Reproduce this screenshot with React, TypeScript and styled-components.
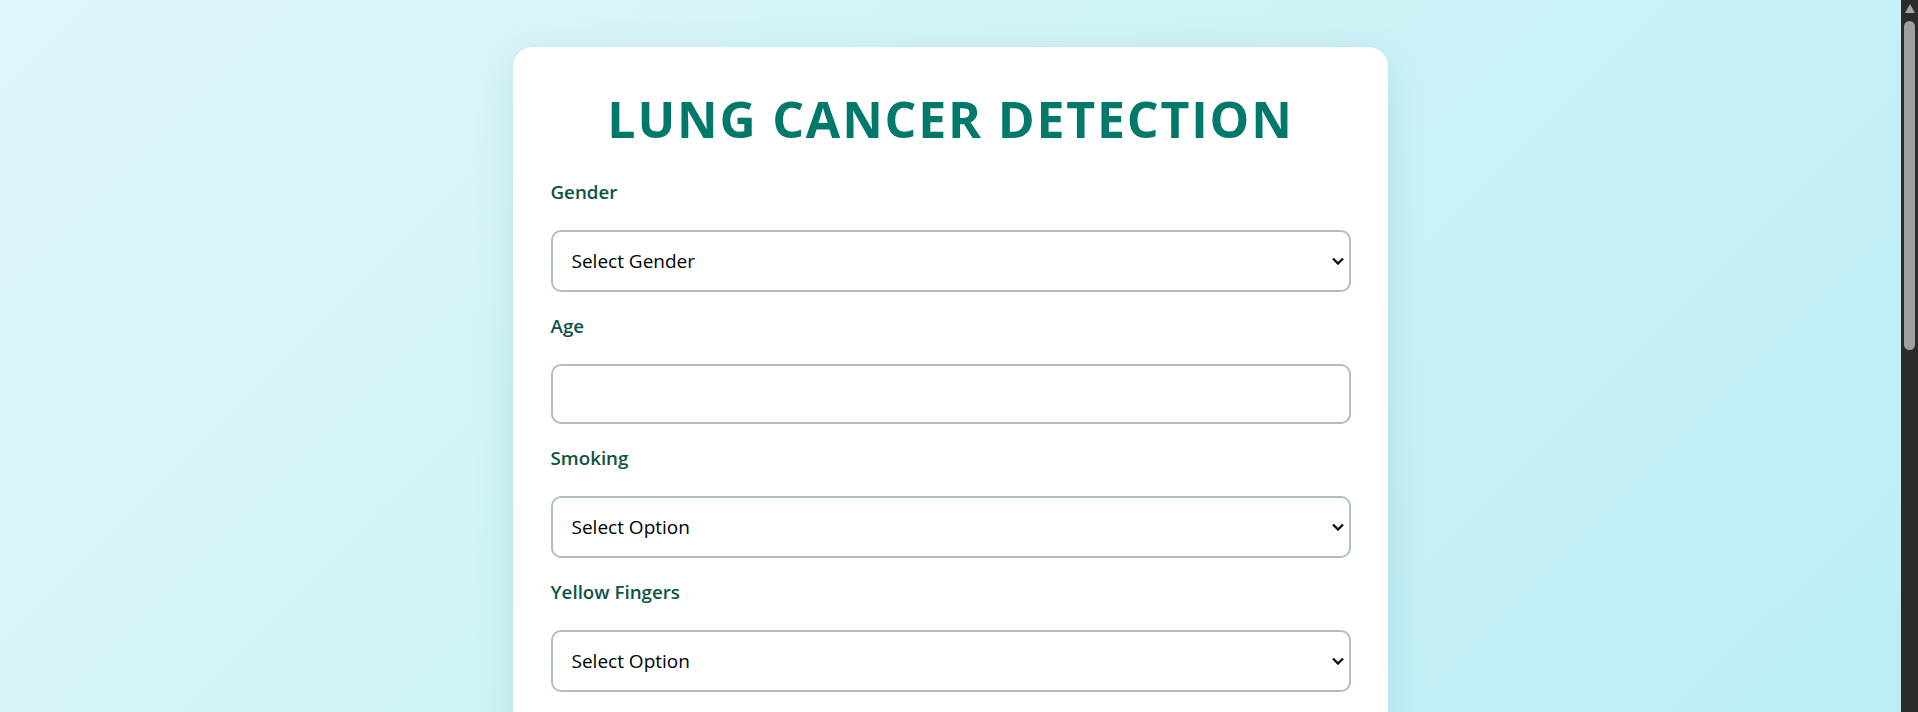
import React from 'react'
import styled, { createGlobalStyle } from 'styled-components'

const GlobalStyle = createGlobalStyle`
  html, body {
    margin: 0;
    padding: 0;
    height: 100%;
    overflow: hidden;
  }
  body {
    font-family: 'Open Sans', 'Noto Sans', 'Liberation Sans', sans-serif;
    color: #000;
  }
`

const Shell = styled.div`
  display: flex;
  height: 100vh;
`

const Viewport = styled.main`
  flex: 1;
  overflow-y: auto;
  scrollbar-width: none;
`

const Page = styled.div`
  padding: 47px 0;
  background: linear-gradient(135deg, #e0f7fa, #b2ebf2);
`

const ScrollRail = styled.div`
  width: 17px;
  flex-shrink: 0;
  background: #2b2b2b;
  display: flex;
  flex-direction: column;
  align-items: center;
  padding-top: 4px;
  box-sizing: border-box;
`

const RailArrow = styled.div`
  width: 0;
  height: 0;
  border-left: 5px solid transparent;
  border-right: 5px solid transparent;
  border-bottom: 9px solid #a3a3a3;
`

const RailThumb = styled.div`
  width: 11px;
  height: 329px;
  margin-top: 8px;
  border-radius: 6px;
  background: #9f9f9f;
`

const Card = styled.form`
  width: 875px;
  box-sizing: border-box;
  margin: 0 auto;
  padding: 37.5px;
  background: #ffffff;
  border-radius: 20px;
  box-shadow: 0 10px 40px rgba(0, 96, 110, 0.12);
`

const Title = styled.h1`
  margin: 0 0 26px;
  text-align: center;
  font-size: 50px;
  line-height: 68px;
  font-weight: 700;
  letter-spacing: 1.8px;
  color: #00796b;
`

const Field = styled.div`
  margin-bottom: 21px;
`

const Label = styled.label`
  display: block;
  font-size: 18.75px;
  line-height: 25.5px;
  font-weight: 600;
  color: #0d5446;
  margin-bottom: 25.5px;
`

const SelectWrap = styled.div`
  position: relative;
`

const controlBase = `
  display: block;
  width: 100%;
  box-sizing: border-box;
  border: 2px solid #b0bec5;
  border-radius: 10px;
  background: #fff;
  font-family: 'Open Sans', 'Noto Sans', 'Liberation Sans', sans-serif;
  font-size: 19px;
  color: #000;
  outline: none;
`

const Select = styled.select`
  ${controlBase}
  height: 62px;
  padding: 0 40px 0 19px;
  appearance: none;
  -webkit-appearance: none;
`

const Input = styled.input`
  ${controlBase}
  height: 60px;
  padding: 0 19px;
`

const Chevron = styled.svg`
  position: absolute;
  right: 7px;
  top: 50%;
  width: 12px;
  height: 8px;
  margin-top: -4px;
  pointer-events: none;
`

const Button = styled.button`
  display: block;
  width: 100%;
  height: 62px;
  margin-top: 25px;
  border: none;
  border-radius: 10px;
  background: #00796b;
  color: #fff;
  font-family: 'Open Sans', 'Noto Sans', 'Liberation Sans', sans-serif;
  font-size: 20px;
  font-weight: 600;
  letter-spacing: 1px;
`

const fields = [
  { label: 'Gender', kind: 'select', placeholder: 'Select Gender' },
  { label: 'Age', kind: 'input' },
  { label: 'Smoking', kind: 'select', placeholder: 'Select Option' },
  { label: 'Yellow Fingers', kind: 'select', placeholder: 'Select Option' },
  { label: 'Anxiety', kind: 'select', placeholder: 'Select Option' },
  { label: 'Peer Pressure', kind: 'select', placeholder: 'Select Option' },
  { label: 'Chronic Disease', kind: 'select', placeholder: 'Select Option' },
  { label: 'Fatigue', kind: 'select', placeholder: 'Select Option' },
]

const App = () => {
  return (
    <>
      <GlobalStyle />
      <Shell>
        <Viewport>
          <Page>
            <Card onSubmit={(e) => e.preventDefault()}>
              <Title>LUNG CANCER DETECTION</Title>
              {fields.map((f) => (
                <Field key={f.label}>
                  <Label>{f.label}</Label>
                  {f.kind === 'input' ? (
                    <Input type="number" />
                  ) : (
                    <SelectWrap>
                      <Select defaultValue="">
                        <option value="">{f.placeholder}</option>
                        {f.label === 'Gender' ? (
                          <>
                            <option value="1">Male</option>
                            <option value="0">Female</option>
                          </>
                        ) : (
                          <>
                            <option value="2">Yes</option>
                            <option value="1">No</option>
                          </>
                        )}
                      </Select>
                      <Chevron viewBox="0 0 12 8">
                        <polyline
                          points="1,1.5 6,6.5 11,1.5"
                          fill="none"
                          stroke="#111"
                          strokeWidth="2.4"
                        />
                      </Chevron>
                    </SelectWrap>
                  )}
                </Field>
              ))}
              <Button type="submit">Predict</Button>
            </Card>
          </Page>
        </Viewport>
        <ScrollRail>
          <RailArrow />
          <RailThumb />
        </ScrollRail>
      </Shell>
    </>
  )
}

export default App
